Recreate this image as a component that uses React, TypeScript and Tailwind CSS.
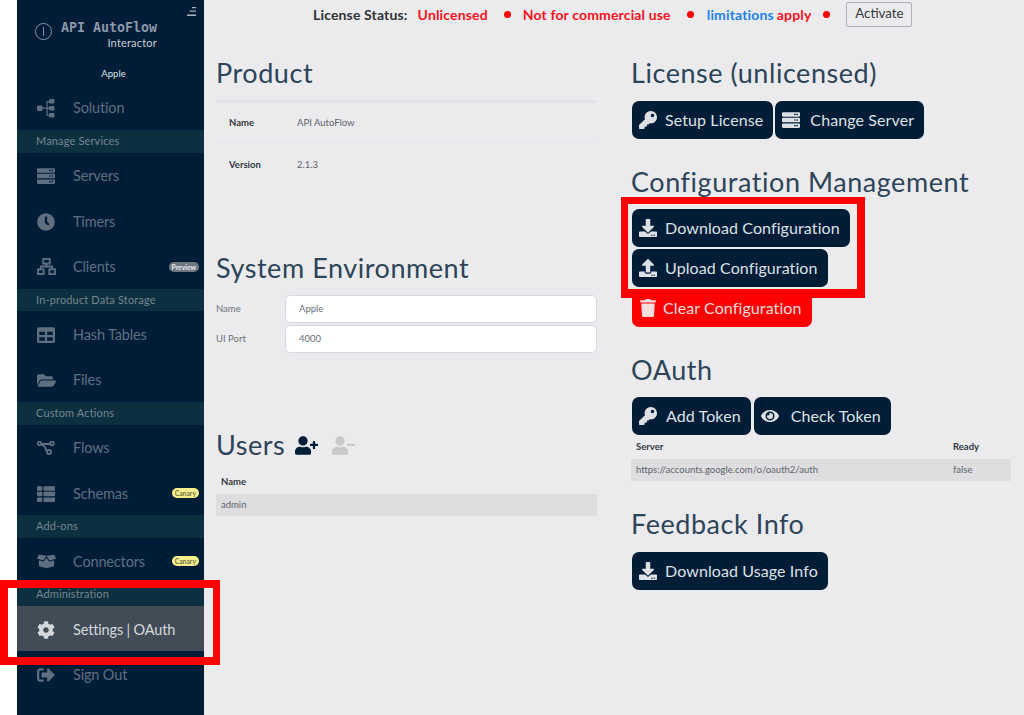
import type { ReactNode } from "react";
import {
  FaBoxOpen,
  FaClock,
  FaCog,
  FaDownload,
  FaEye,
  FaFolderOpen,
  FaKey,
  FaServer,
  FaSignOutAlt,
  FaTable,
  FaThList,
  FaTrash,
  FaUpload,
  FaUserMinus,
  FaUserPlus,
} from "react-icons/fa";

const SolutionIcon = () => (
  <svg viewBox="0 0 20 20" className="h-[20px] w-[20px]" fill="currentColor">
    <rect x="0" y="7.5" width="5.5" height="5.5" rx="1" />
    <rect x="12" y="1" width="5.5" height="4.5" rx="1" />
    <rect x="12" y="8" width="5.5" height="4.5" rx="1" />
    <rect x="12" y="15" width="5.5" height="4.5" rx="1" />
    <path d="M5 9.5h4.5V3h3v1.2h-1.8v5.3h1.8v1.2h-1.8v6h1.8V18h-3v-7.3H5z" />
  </svg>
);

const ClientsIcon = () => (
  <svg viewBox="0 0 20 18" className="h-[17px] w-[19px]" fill="none" stroke="currentColor" strokeWidth="2">
    <rect x="6.5" y="1" width="7" height="5" />
    <rect x="1" y="12" width="6" height="5" />
    <rect x="13" y="12" width="6" height="5" />
    <path d="M10 6v3M4 12V9h12v3" />
  </svg>
);

const FlowsIcon = () => (
  <svg viewBox="0 0 18 14" className="h-[14px] w-[18px]" fill="none" stroke="currentColor" strokeWidth="1.8">
    <path d="M3 3h11M3 3c4 1 6 3 6.5 7.5" />
    <circle cx="2.5" cy="2.5" r="1.8" fill="#001d38" />
    <circle cx="15" cy="2.5" r="1.8" fill="#001d38" />
    <circle cx="12" cy="11" r="2" fill="#001d38" />
  </svg>
);

function NavItem({
  icon,
  label,
  badge,
  active,
}: {
  icon: ReactNode;
  label: string;
  badge?: "Preview" | "Canary";
  active?: boolean;
}) {
  return (
    <div
      className={`flex h-[45.33px] items-center pt-[2px] pr-[5px] pl-[20px] text-[14.5px] tracking-[-0.15px] ${
        active ? "bg-[#414c57] text-[#d5d8dc]" : "text-[#5f6f80]"
      }`}
    >
      <span className="flex w-[36px] shrink-0 items-center">{icon}</span>
      <span>{label}</span>
      {badge === "Preview" && (
        <span className="mt-[1px] ml-auto rounded-full bg-[#6f7882] px-[3px] text-[6.8px] leading-[10px] font-bold tracking-normal text-[#e8eaec]">
          Preview
        </span>
      )}
      {badge === "Canary" && (
        <span className="mb-[1px] ml-auto rounded-full bg-[#f5f08c] px-[3px] text-[6.8px] leading-[10px] font-bold tracking-normal text-[#77774a]">
          Canary
        </span>
      )}
    </div>
  );
}

function Band({ children }: { children: string }) {
  return (
    <div className="flex h-[22.67px] items-center bg-[#0c3040] pl-[19px] text-[11px] tracking-[0.15px] text-[#75858f]">
      {children}
    </div>
  );
}

function Btn({
  icon,
  children,
  red,
  gap = "gap-[8px]",
}: {
  icon: ReactNode;
  children: string;
  red?: boolean;
  gap?: string;
}) {
  return (
    <div
      className={`inline-flex h-[38px] items-center rounded-[7px] pr-[10px] pb-px pl-[7px] text-[16px] tracking-[0.1px] ${gap} ${
        red ? "bg-[#ff0000] text-[#f6dede]" : "bg-[#001d38] text-[#dde1e6]"
      }`}
    >
      <span className="flex w-[18px] justify-center">{icon}</span>
      {children}
    </div>
  );
}

function Heading({ children }: { children: ReactNode }) {
  return <h2 className="text-[27px] leading-[32px] tracking-[0.55px] text-[#2d4459]">{children}</h2>;
}

function GrayTable({ head, row }: { head: string[]; row: string[] }) {
  return (
    <div className="text-[9.5px]">
      <div className="flex h-[24px] items-center pl-[5px] font-bold text-[#33393f]">
        <span className="flex-1">{head[0]}</span>
        {head[1] && <span className="w-[58px]">{head[1]}</span>}
      </div>
      <div className="flex h-[22px] items-center bg-[#dedee1] pl-[5px] text-[#5d646b]">
        <span className="flex-1">{row[0]}</span>
        {row[1] && <span className="w-[58px]">{row[1]}</span>}
      </div>
    </div>
  );
}

function Field({ label, value }: { label: string; value: string }) {
  return (
    <div className="flex items-center">
      <span className="w-[69px] text-[9.5px] text-[#6a7279]">{label}</span>
      <div className="flex h-[28px] flex-1 items-center rounded-[5px] border border-[#d6dae2] bg-white pl-[13px] text-[9.5px] text-[#6a7279]">
        {value}
      </div>
    </div>
  );
}

export default function App() {
  return (
    <div className="relative flex h-[715px] w-[1024px] overflow-hidden bg-white pl-[17px] font-['Lato',sans-serif]">
      {/* Sidebar */}
      <aside className="flex w-[187px] shrink-0 flex-col bg-[#001d38]">
        <div className="flex h-[84.67px] flex-col">
          <div className="flex justify-end pt-[7px] pr-[7px]">
            <svg viewBox="0 0 10 10" className="h-[10px] w-[10px]" fill="#aab4c0">
              <rect x="5" y="0" width="4" height="1.2" />
              <rect x="2.5" y="3.5" width="6.5" height="1.2" />
              <rect x="0" y="7.5" width="9" height="1.5" />
            </svg>
          </div>
          <div className="flex pt-[3px] pl-[18px]">
            <div className="mt-[3px] flex h-[17px] w-[17px] items-center justify-center rounded-full border border-[#8a96a5]">
              <span className="h-[9px] w-px bg-[#8a96a5]" />
            </div>
            <div className="ml-[9px] flex w-[96px] flex-col items-end">
              <span className="font-['DejaVu_Sans_Mono',monospace] text-[13.3px] leading-[16px] font-bold whitespace-nowrap text-[#8b97a8]">
                API AutoFlow
              </span>
              <span className="text-[11px] leading-[13px] tracking-[0.2px] text-[#c8ced6]">Interactor</span>
            </div>
          </div>
          <div className="mt-[18px] pl-[6px] text-center text-[9.5px] leading-[14px] text-[#dfe3e8]">Apple</div>
        </div>
        <NavItem icon={<SolutionIcon />} label="Solution" />
        <Band>Manage Services</Band>
        <NavItem icon={<FaServer size={18} />} label="Servers" />
        <NavItem icon={<FaClock size={18} />} label="Timers" />
        <NavItem icon={<ClientsIcon />} label="Clients" badge="Preview" />
        <Band>In-product Data Storage</Band>
        <NavItem icon={<FaTable size={18} />} label="Hash Tables" />
        <NavItem icon={<FaFolderOpen size={19} />} label="Files" />
        <Band>Custom Actions</Band>
        <NavItem icon={<FlowsIcon />} label="Flows" />
        <NavItem icon={<FaThList size={18} />} label="Schemas" badge="Canary" />
        <Band>Add-ons</Band>
        <NavItem icon={<FaBoxOpen size={19} />} label="Connectors" badge="Canary" />
        <Band>Administration</Band>
        <NavItem icon={<FaCog size={18} />} label="Settings | OAuth" active />
        <NavItem icon={<FaSignOutAlt size={18} />} label="Sign Out" />
      </aside>

      {/* Main */}
      <main className="flex min-w-0 flex-1 flex-col bg-[#ebebee]">
        <div className="flex h-[28px] items-center pl-[109px] text-[14px] font-bold tracking-[0.15px]">
          <span className="text-[#2f3336]">License Status:</span>
          <span className="ml-[10px] text-[#ff1020]">Unlicensed</span>
          <span className="ml-[16px] h-[7px] w-[7px] rounded-full bg-[#ff0000]" />
          <span className="ml-[12px] text-[#ff1020]">Not for commercial use</span>
          <span className="ml-[16px] h-[7px] w-[7px] rounded-full bg-[#ff0000]" />
          <span className="ml-[13px] text-[#1a80f0]">limitations</span>
          <span className="ml-[3px] text-[#ff1020]">apply</span>
          <span className="ml-[12px] h-[7px] w-[7px] rounded-full bg-[#ff0000]" />
          <span className="ml-[16px] flex h-[25px] w-[66px] items-center justify-center rounded-[2px] border border-[#aeb0b4] text-[13.3px] font-normal tracking-normal text-[#34383c]">
            Activate
          </span>
        </div>

        <div className="flex pt-px pr-[13px] pl-[12px]">
          {/* Left column */}
          <div className="w-[381px] shrink-0">
            <div className="h-[211px] pt-[28px]">
              <Heading>Product</Heading>
              <div className="mt-[11px] h-[3px] bg-[#e2e4e9]" />
              <div className="flex h-[41px] items-center border-b border-[#e6e6ea] pl-[13px] text-[9.5px]">
                <span className="w-[68px] font-bold text-[#33393f]">Name</span>
                <span className="text-[#5d646b]">API AutoFlow</span>
              </div>
              <div className="flex h-[41px] items-center pt-px pl-[13px] text-[9.5px]">
                <span className="w-[68px] font-bold text-[#33393f]">Version</span>
                <span className="text-[#5d646b]">2.1.3</span>
              </div>
            </div>
            <div className="h-[165px] pt-[12px]">
              <Heading>System Environment</Heading>
              <div className="mt-[11px] flex flex-col gap-[2px]">
                <Field label="Name" value="Apple" />
                <Field label="UI Port" value="4000" />
              </div>
            </div>
            <div className="pt-[24px]">
              <div className="flex items-center">
                <Heading>Users</Heading>
                <FaUserPlus size={23} className="ml-[10px] text-[#001d38]" />
                <FaUserMinus size={23} className="ml-[14px] text-[#c9c9cc]" />
              </div>
              <div className="mt-[9px]">
                <GrayTable head={["Name"]} row={["admin"]} />
              </div>
            </div>
          </div>

          {/* Right column */}
          <div className="ml-[34px] w-[380px] shrink-0">
            <div className="pt-[28px]">
              <Heading>License (unlicensed)</Heading>
              <div className="mt-[12px] ml-px flex gap-[2px]">
                <Btn icon={<FaKey size={18} />}>Setup License</Btn>
                <Btn icon={<FaServer size={18} />} gap="gap-[10px]">
                  Change Server
                </Btn>
              </div>
            </div>
            <div className="pt-[27px]">
              <Heading>Configuration Management</Heading>
              <div className="mt-[11px] ml-px flex flex-col items-start gap-[2px]">
                <Btn icon={<FaDownload size={18} />}>Download Configuration</Btn>
                <Btn icon={<FaUpload size={18} />}>Upload Configuration</Btn>
                <Btn icon={<FaTrash size={18} />} red gap="gap-[6px]">
                  Clear Configuration
                </Btn>
              </div>
            </div>
            <div className="pt-[27px]">
              <Heading>OAuth</Heading>
              <div className="mt-[11px] ml-px flex gap-[3px]">
                <Btn icon={<FaKey size={18} />} gap="gap-[9px]">
                  Add Token
                </Btn>
                <Btn icon={<FaEye size={20} />} gap="gap-[12px]">
                  Check Token
                </Btn>
              </div>
              <GrayTable head={["Server", "Ready"]} row={["https://accounts.google.com/o/oauth2/auth", "false"]} />
            </div>
            <div className="pt-[27px]">
              <Heading>Feedback Info</Heading>
              <div className="mt-[12px] ml-px">
                <Btn icon={<FaDownload size={18} />}>Download Usage Info</Btn>
              </div>
            </div>
          </div>
        </div>
      </main>

      {/* Annotation boxes drawn over the screenshot */}
      <div className="absolute top-[580px] left-0 h-[85px] w-[220px] border-[8px] border-r-[7px] border-[#ff0000]" />
      <div className="absolute top-[197px] left-[621px] h-[101px] w-[244px] border-[7px] border-r-[8px] border-b-[9px] border-[#ff0000]" />
    </div>
  );
}
